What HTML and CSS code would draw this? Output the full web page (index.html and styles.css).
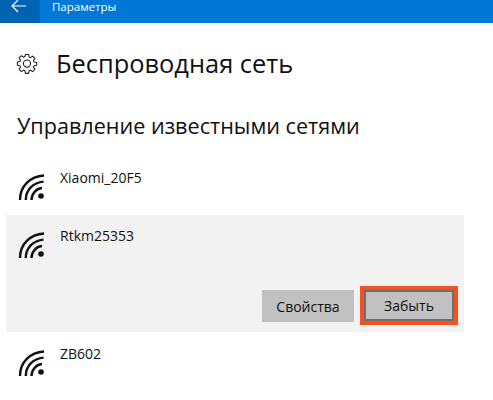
FILE: index.html
```html
<!DOCTYPE html>
<html lang="ru">
<head>
  <meta charset="UTF-8" />
  <title>Параметры</title>
  <link rel="stylesheet" href="styles.css">
</head>
<body>

  <div class="titlebar">
    <div class="back-btn">
      <svg width="16" height="14" viewBox="0 0 16 14"><path d="M7 1 1 7l6 6M1 7h14" fill="none" stroke="#fff" stroke-width="1.2"/></svg>
    </div>
    <span class="app-name">Параметры</span>
  </div>

  <div class="page-head">
    <svg class="gear" width="22" height="22" viewBox="0 0 22 22">
      <path d="M9.2 1.5h3.6l.5 2.8 1.6.7 2.4-1.6 2.5 2.5-1.6 2.4.7 1.6 2.8.5v3.2l-2.8.5-.7 1.6 1.6 2.4-2.5 2.5-2.4-1.6-1.6.7-.5 2.8H9.2l-.5-2.8-1.6-.7-2.4 1.6-2.5-2.5 1.6-2.4-.7-1.6-2.8-.5V9.9l2.8-.5.7-1.6-1.6-2.4 2.5-2.5 2.4 1.6 1.6-.7z" transform="translate(1.1 1.1) scale(.9)" fill="none" stroke="#222" stroke-width="1.2" stroke-linejoin="round"/>
      <circle cx="11" cy="11.6" r="3.6" fill="none" stroke="#222" stroke-width="1.1"/>
    </svg>
    <h1>Беспроводная сеть</h1>
  </div>

  <h2>Управление известными сетями</h2>

  <div class="network">
    <svg class="wifi" width="28" height="26" viewBox="0 0 28 26"><use href="#wifi-icon"/></svg>
    <span class="net-name">Xiaomi_20F5</span>
  </div>

  <div class="network selected">
    <div class="net-row">
      <svg class="wifi" width="28" height="26" viewBox="0 0 28 26"><use href="#wifi-icon"/></svg>
      <span class="net-name">Rtkm25353</span>
    </div>
    <div class="net-btns">
      <button class="btn">Свойства</button>
      <button class="btn forget">Забыть</button>
    </div>
  </div>

  <div class="network">
    <svg class="wifi" width="28" height="26" viewBox="0 0 28 26"><use href="#wifi-icon"/></svg>
    <span class="net-name">ZB602</span>
  </div>

  <svg width="0" height="0" class="defs">
    <defs>
      <g id="wifi-icon" fill="none" stroke="#111" stroke-width="2.4">
        <path d="M2 26C2 12 12 2.5 26 1.5"/>
        <path d="M7.8 26C7.8 16 15 8.5 25.5 7.6"/>
        <path d="M13.5 26C13.5 20 18 14.5 24 14"/>
        <circle cx="23" cy="22" r="2.8" fill="#111" stroke="none"/>
      </g>
    </defs>
  </svg>

</body>
</html>
```

FILE: styles.css
```css
body {
  margin: 0;
  font-family: "Open Sans", "Noto Sans", sans-serif;
  color: #111;
  background: #fff;
  overflow: hidden;
}

.titlebar {
  display: flex;
  align-items: center;
  height: 23px;
  background: #0078d7;
  color: #fff;
}

.back-btn {
  display: flex;
  align-items: center;
  justify-content: center;
  width: 40px;
  height: 100%;
  background: #0063b1;
  margin-right: 12px;
  padding: 0 3px 11px 0;
  box-sizing: border-box;
}

.app-name {
  font-size: 11.5px;
  padding-bottom: 11px;
}

.page-head {
  display: flex;
  align-items: center;
  gap: 18px;
  margin: 22px 0 0 16px;
  height: 36px;
}

h1 {
  margin: 0;
  font-size: 25.4px;
  font-weight: 400;
  line-height: 36px;
}

h2 {
  margin: 29px 0 0 17px;
  font-size: 21.6px;
  font-weight: 400;
  line-height: 32px;
}

.network {
  display: flex;
  gap: 14px;
  padding: 0 0 0 18px;
  height: 52px;
  margin-top: 32px;
}

.network.selected {
  display: block;
  margin: 0 29px 0 6px;
  padding: 17px 0 0 12px;
  height: 117px;
  box-sizing: border-box;
  background: #f2f2f2;
}

.network + .network.selected { margin-top: -11px; }

.selected + .network { margin-top: 18px; }

.net-row {
  display: flex;
  gap: 14px;
  height: 58px;
}

.wifi { flex: none; }

.net-name {
  font-size: 14px;
  line-height: 18px;
  margin-top: -5px;
}

.net-btns {
  display: flex;
  justify-content: flex-end;
  gap: 10px;
  padding-right: 10px;
}

.btn {
  width: 92px;
  height: 32px;
  padding: 0;
  border: none;
  background: #c1c1c1;
  color: #111;
  font-family: inherit;
  font-size: 14px;
}

.forget {
  width: 86px;
  height: 27px;
  margin: 0;
  border: 2px solid #6f6f6f;
  outline: 4px solid #f4511e;
  box-sizing: content-box;
}

.defs { position: absolute; }
```
